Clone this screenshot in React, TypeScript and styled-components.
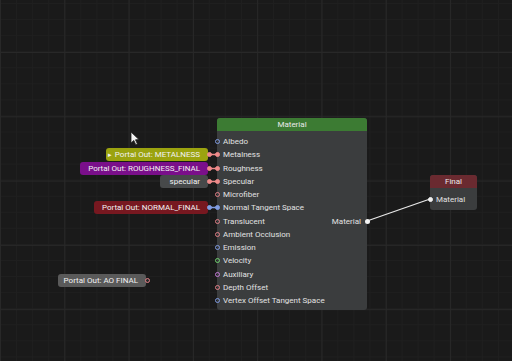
import React from "react";
import styled, { createGlobalStyle } from "styled-components";

type Pin = { label: string; color: string; filled?: boolean };

const inputs: Pin[] = [
  { label: "Albedo", color: "#7f9be0" },
  { label: "Metalness", color: "#ee8a8a", filled: true },
  { label: "Roughness", color: "#ee8a8a", filled: true },
  { label: "Specular", color: "#ee8a8a", filled: true },
  { label: "Microfiber", color: "#e07f86" },
  { label: "Normal Tangent Space", color: "#7f9be0", filled: true },
  { label: "Translucent", color: "#e07f86" },
  { label: "Ambient Occlusion", color: "#e07f86" },
  { label: "Emission", color: "#7f9be0" },
  { label: "Velocity", color: "#6fd06f" },
  { label: "Auxiliary", color: "#c47ad6" },
  { label: "Depth Offset", color: "#e07f86" },
  { label: "Vertex Offset Tangent Space", color: "#7f9be0" },
];

type Portal = {
  text: string;
  bg: string;
  x: number;
  y: number;
  w: number;
  pin: string;
  linked?: boolean;
  arrow?: boolean;
};

const portals: Portal[] = [
  { text: "Portal Out: METALNESS", bg: "#9ba30f", x: 106, y: 148, w: 102, pin: "#ee8a8a", linked: true, arrow: true },
  { text: "Portal Out: ROUGHNESS_FINAL", bg: "#7a0f8a", x: 80, y: 162, w: 128, pin: "#ee8a8a", linked: true },
  { text: "specular", bg: "#47494a", x: 160, y: 175, w: 48, pin: "#ee8a8a", linked: true },
  { text: "Portal Out: NORMAL_FINAL", bg: "#771820", x: 94, y: 201, w: 114, pin: "#7f9be0", linked: true },
  { text: "Portal Out: AO FINAL", bg: "#5a5a5a", x: 58, y: 274, w: 88, pin: "#e07f86" },
];

const App = () => {
  return (
    <>
      <GlobalStyle />
      <Canvas>
        <Wires width={512} height={361}>
          <line x1={367} y1={221} x2={430} y2={199} stroke="#e8e8e8" strokeWidth={1.3} />
          {portals
            .filter((p) => p.linked)
            .map((p) => (
              <line
                key={p.text}
                x1={p.x + p.w + 2}
                y1={p.y + 6.5}
                x2={217}
                y2={p.y + 6.5}
                stroke={p.pin}
                strokeWidth={1.5}
              />
            ))}
        </Wires>

        {portals.map((p) => (
          <PortalNode key={p.text} style={{ left: p.x, top: p.y, width: p.w }} $bg={p.bg}>
            {p.arrow && <Arrow>▸</Arrow>}
            <span>{p.text}</span>
            <PortalPin $color={p.pin} $filled={!!p.linked} />
          </PortalNode>
        ))}

        <MaterialNode>
          <Header $bg="#3c7b33">Material</Header>
          <Body>
            <Inputs>
              {inputs.map((pin) => (
                <Row key={pin.label}>
                  <InPin $color={pin.color} $filled={!!pin.filled} />
                  {pin.label}
                </Row>
              ))}
            </Inputs>
            <Output>
              Material
              <OutPin />
            </Output>
          </Body>
        </MaterialNode>

        <FinalNode>
          <Header $bg="#6a2a30">Final</Header>
          <FinalBody>
            <Row>
              <InPin $color="#f0f0f0" $filled />
              Material
            </Row>
          </FinalBody>
        </FinalNode>

        <Cursor width={10} height={15} viewBox="0 0 10 15">
          <path d="M1 1 L1 12 L3.8 9.4 L5.8 13.8 L7.4 13 L5.5 8.8 L9 8.6 Z" fill="#f4f4f4" stroke="#222" strokeWidth={0.8} />
        </Cursor>
      </Canvas>
    </>
  );
};

const GlobalStyle = createGlobalStyle`
  html, body {
    margin: 0;
    padding: 0;
    background: #1a1a1a;
    overflow: hidden;
  }
  * {
    box-sizing: border-box;
  }
`;

const Canvas = styled.div`
  position: relative;
  width: 512px;
  height: 361px;
  overflow: hidden;
  font-family: Roboto, "Liberation Sans", sans-serif;
  font-size: 8px;
  color: #e2e2e2;
  background-color: #1a1a1a;
  background-image: linear-gradient(to right, #282828 1px, transparent 1px),
    linear-gradient(to bottom, #282828 1px, transparent 1px),
    linear-gradient(to right, #1f1f1f 1px, transparent 1px),
    linear-gradient(to bottom, #1f1f1f 1px, transparent 1px);
  background-size: 64.3px 64.3px, 64.3px 64.3px, 16.075px 16.075px, 16.075px 16.075px;
  background-position: 0 52px, 0 52px, 0 3px, 0 3px;
`;

const Wires = styled.svg`
  position: absolute;
  left: 0;
  top: 0;
  pointer-events: none;
`;

const PortalNode = styled.div<{ $bg: string }>`
  position: absolute;
  height: 13px;
  display: flex;
  align-items: center;
  justify-content: flex-end;
  padding-right: 8px;
  border-radius: 3px;
  background: ${(p) => p.$bg};
  color: #f2f2f2;
  white-space: nowrap;
`;

const Arrow = styled.span`
  position: absolute;
  left: 2px;
  font-size: 7px;
  color: #f2f2f2;
`;

const PortalPin = styled.div<{ $color: string; $filled: boolean }>`
  position: absolute;
  right: -4px;
  top: 4px;
  width: 5px;
  height: 5px;
  border-radius: 50%;
  border: 1px solid ${(p) => p.$color};
  background: ${(p) => (p.$filled ? p.$color : "#2a2a2a")};
`;

const MaterialNode = styled.div`
  position: absolute;
  left: 217px;
  top: 118px;
  width: 150px;
  display: flex;
  flex-direction: column;
  border-radius: 3px;
  background: #3b3d3e;
`;

const Header = styled.div<{ $bg: string }>`
  height: 13px;
  display: flex;
  align-items: center;
  justify-content: center;
  background: ${(p) => p.$bg};
  border-radius: 3px 3px 0 0;
  color: #eaeaea;
`;

const Body = styled.div`
  position: relative;
  display: flex;
  padding: 4px 0 3px;
`;

const Inputs = styled.div`
  display: flex;
  flex-direction: column;
`;

const Row = styled.div`
  position: relative;
  height: 13.25px;
  display: flex;
  align-items: center;
  padding-left: 6px;
  white-space: nowrap;
`;

const InPin = styled.div<{ $color: string; $filled: boolean }>`
  position: absolute;
  left: -2.5px;
  top: 4px;
  width: 5px;
  height: 5px;
  border-radius: 50%;
  border: 1px solid ${(p) => p.$color};
  background: ${(p) => (p.$filled ? p.$color : "transparent")};
`;

const Output = styled.div`
  position: absolute;
  right: 0;
  top: 83.5px;
  height: 13.25px;
  display: flex;
  align-items: center;
  padding-right: 6px;
`;

const OutPin = styled.div`
  position: absolute;
  right: -2.5px;
  top: 4px;
  width: 5px;
  height: 5px;
  border-radius: 50%;
  background: #f4f4f4;
`;

const FinalNode = styled.div`
  position: absolute;
  left: 430px;
  top: 175px;
  width: 47px;
  border-radius: 3px;
  background: #3b3d3e;
`;

const FinalBody = styled.div`
  padding: 5px 0 4px;
`;

const Cursor = styled.svg`
  position: absolute;
  left: 130px;
  top: 131px;
`;

export default App;
